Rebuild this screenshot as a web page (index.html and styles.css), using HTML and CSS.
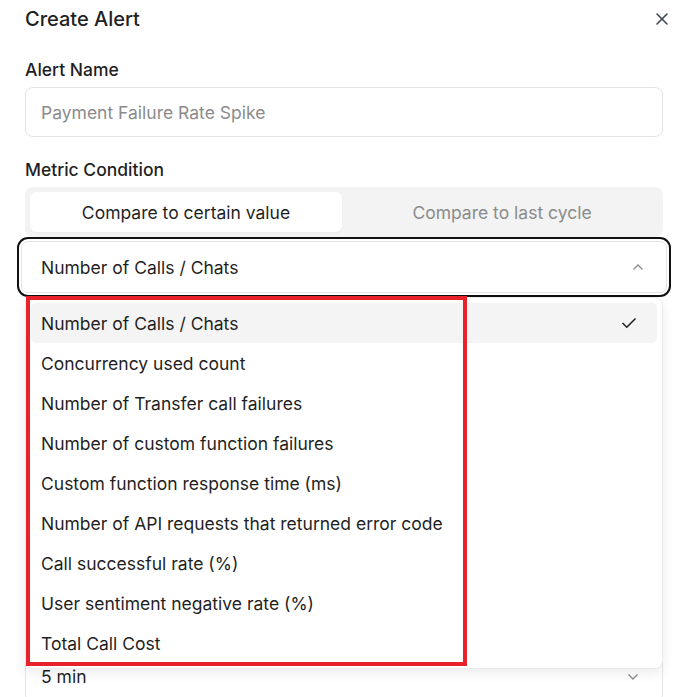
FILE: index.html
```html
<!DOCTYPE html>
<html>
<head>
<meta charset="utf-8">
<link rel="stylesheet" href="styles.css">
</head>
<body>
<div class="modal">
  <div class="header">
    <h1 class="title">Create Alert</h1>
    <svg class="close" width="14" height="14" viewBox="0 0 14 14"><path d="M2 2L12 12M12 2L2 12" stroke="#3f4654" stroke-width="1.6" stroke-linecap="round"/></svg>
  </div>

  <div class="field">
    <label class="label">Alert Name</label>
    <div class="input placeholder">Payment Failure Rate Spike</div>
  </div>

  <div class="field">
    <label class="label">Metric Condition</label>
    <div class="segmented">
      <div class="seg active">Compare to certain value</div>
      <div class="seg">Compare to last cycle</div>
    </div>
    <div class="select-wrap">
      <div class="select focused">
        <span>Number of Calls / Chats</span>
        <svg class="chev" width="12" height="8" viewBox="0 0 12 8"><path d="M1.5 6.5L6 2L10.5 6.5" fill="none" stroke="#8a8a8a" stroke-width="1.3"/></svg>
      </div>
      <div class="menu">
        <div class="option selected"><span>Number of Calls / Chats</span>
          <svg width="16" height="12" viewBox="0 0 16 12"><path d="M1.5 6L5.8 10.2L14.5 1.5" fill="none" stroke="#222" stroke-width="1.6"/></svg>
        </div>
        <div class="option">Concurrency used count</div>
        <div class="option">Number of Transfer call failures</div>
        <div class="option">Number of custom function failures</div>
        <div class="option">Custom function response time (ms)</div>
        <div class="option">Number of API requests that returned error code</div>
        <div class="option">Call successful rate (%)</div>
        <div class="option">User sentiment negative rate (%)</div>
        <div class="option">Total Call Cost</div>
      </div>
      <div class="highlight"></div>
    </div>
    <div class="select next">
      <span>5 min</span>
      <svg class="chev" width="12" height="8" viewBox="0 0 12 8"><path d="M1.5 1.5L6 6L10.5 1.5" fill="none" stroke="#8a8a8a" stroke-width="1.3"/></svg>
    </div>
  </div>
</div>
</body>
</html>
```
FILE: styles.css
```css
* { box-sizing: border-box; }
html, body { margin: 0; padding: 0; background: #fff; }
body {
  font-family: Inter, "Noto Sans", sans-serif;
  font-weight: 400;
  color: #1f1f1f;
  overflow: hidden;
  height: 697px;
}
.modal {
  padding: 6px 24px 0 25px;
}
.header {
  display: flex;
  justify-content: space-between;
  align-items: center;
  height: 26px;
}
.title {
  margin: 0;
  font-size: 20px;
  font-weight: 500;
}
.close { margin-right: -6px; }
.field { margin-top: 27px; }
.field + .field { margin-top: 22px; }
.label {
  display: block;
  font-size: 17.5px;
  font-weight: 500;
  line-height: 22px;
  margin-bottom: 6px;
}
.input {
  height: 50px;
  border: 1px solid #e4e4e4;
  border-radius: 8px;
  display: flex;
  align-items: center;
  padding: 0 15px;
  font-size: 17.5px;
}
.placeholder { color: #8b8b8b; }
.segmented {
  display: grid;
  grid-template-columns: 1fr 1fr;
  gap: 4px;
  background: #f3f3f3;
  border-radius: 8px;
  padding: 5px;
  height: 50px;
}
.seg {
  display: flex;
  align-items: center;
  justify-content: center;
  font-size: 17.5px;
  color: #8b8b8b;
  border-radius: 6px;
}
.seg.active {
  background: #fff;
  color: #1f1f1f;
  box-shadow: 0 1px 2px rgba(0,0,0,0.04);
}
.select-wrap { position: relative; margin-top: 4px; }
.select {
  height: 52px;
  border: 1px solid #e4e4e4;
  border-radius: 8px;
  display: flex;
  align-items: center;
  justify-content: space-between;
  padding: 0 23px 0 15px;
  font-size: 17.5px;
}
.select.focused {
  outline: 2px solid #111;
  outline-offset: 2px;
  border-radius: 7px;
  margin: 0 -4px;
  padding: 0 22px 0 19px;
}
.menu {
  position: absolute;
  left: 0;
  right: 0;
  top: 56px;
  background: #fff;
  border: 1px solid #ececec;
  border-radius: 8px;
  box-shadow: 0 4px 12px rgba(0,0,0,0.08);
  padding: 5px;
  z-index: 2;
}
.option {
  height: 40px;
  display: flex;
  align-items: center;
  justify-content: space-between;
  padding: 0 20px 0 10px;
  font-size: 17.5px;
  border-radius: 5px;
}
.option.selected { background: #f4f4f4; }
.highlight {
  position: absolute;
  left: 1px;
  top: 55px;
  width: 441px;
  height: 370px;
  border: 4px solid #e8222b;
  z-index: 3;
}
.select.next {
  margin-top: 359px;
  height: 50px;
  border-top: none;
  border-radius: 0 0 8px 8px;
}
```
